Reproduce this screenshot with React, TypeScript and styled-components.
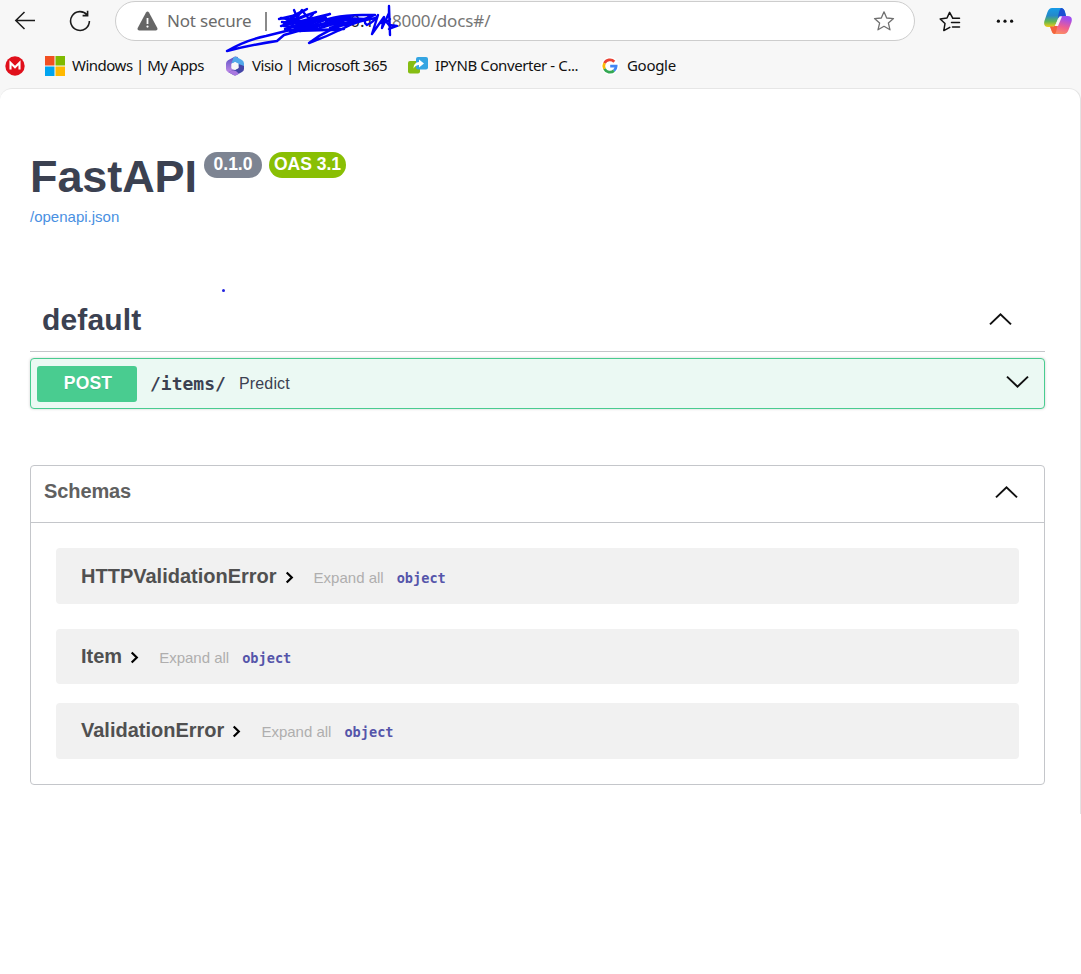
import React from "react";
import styled, { createGlobalStyle } from "styled-components";

const Global = createGlobalStyle`
  * { box-sizing: border-box; }
  body { margin: 0; background: #fff; font-family: "Liberation Sans", Arial, sans-serif; }
  h1, h2, h3 { margin: 0; }
  svg { display: block; flex: none; }
`;

const ui = `"Noto Sans", "Segoe UI", sans-serif`;
const mono = `"DejaVu Sans Mono", monospace`;

const Window = styled.div`
  width: 1081px;
  height: 974px;
  overflow: hidden;
  background: #fff;
`;

const Chrome = styled.header`
  height: 100px;
  background: #f7f7f7;
  margin-bottom: -12px;
  font-family: ${ui};
`;

const Toolbar = styled.div`
  display: flex;
  align-items: center;
  height: 42px;
  padding: 0 9px 0 14px;
`;

const AddressBar = styled.div`
  position: relative;
  display: flex;
  align-items: center;
  width: 800px;
  height: 40px;
  margin: 0 24px 0 24px;
  padding: 0 19px 0 21px;
  border: 1px solid #cdcdcd;
  border-radius: 20px;
  background: #fff;
  color: #6b6b6b;
  font-size: 17px;
`;

const NotSecure = styled.span`
  width: 85px;
  margin-left: 9px;
  padding-bottom: 2px;
  letter-spacing: -0.2px;
  white-space: nowrap;
`;

const Divider = styled.span`
  width: 2px;
  height: 19px;
  margin-left: 13px;
  background: #8a8a8a;
`;

const Url = styled.span`
  flex: 1;
  display: flex;
  margin-left: 10px;
  padding-bottom: 2px;
  white-space: nowrap;
`;

const Host = styled.span`
  width: 115px;
  text-align: right;
  color: #222;
`;

const Path = styled.span`
  color: #767676;
  letter-spacing: -0.1px;
`;

const Scribble = styled.svg`
  position: absolute;
  left: 107px;
  top: 1px;
`;

const Favorites = styled.nav`
  display: flex;
  align-items: center;
  height: 47px;
  padding-left: 5px;
`;

const Favorite = styled.div<{ $width: number; $gap?: number }>`
  display: flex;
  align-items: center;
  gap: ${(p) => p.$gap ?? 7}px;
  width: ${(p) => p.$width}px;
`;

const FavoriteName = styled.span<{ $track: number }>`
  padding-bottom: 2px;
  color: #111;
  font-size: 15px;
  letter-spacing: ${(p) => p.$track}px;
  white-space: nowrap;
`;

const Page = styled.main`
  position: relative;
  height: 726px;
  padding: 63px 35px 0 30px;
  background: #fff;
  border-top: 1px solid #e6e6e6;
  border-right: 1px solid #e3e3e3;
  border-radius: 12px 12px 0 0;
`;

const TitleRow = styled.div`
  display: flex;
  align-items: flex-start;
  height: 56px;
`;

const Title = styled.h1`
  width: 174px;
  color: #3b4151;
  font-size: 45px;
  line-height: 50px;
  letter-spacing: -0.1px;
`;

const Pill = styled.span<{ $bg: string; $width: number }>`
  width: ${(p) => p.$width}px;
  height: 26px;
  margin-right: 7px;
  border-radius: 13px;
  background: ${(p) => p.$bg};
  color: #fff;
  font-size: 17.5px;
  font-weight: 700;
  line-height: 24px;
  text-align: center;
  white-space: nowrap;
`;

const SpecLink = styled.a`
  display: block;
  height: 86px;
  color: #4990e2;
  font-size: 15px;
  line-height: 18px;
`;

const TagHeader = styled.div`
  display: flex;
  align-items: center;
  justify-content: space-between;
  height: 58px;
  padding: 0 33px 6px 12px;
  border-bottom: 1px solid #c4c6ca;
`;

const TagTitle = styled.h2`
  color: #3b4151;
  font-size: 30px;
  line-height: 34px;
  letter-spacing: 0.15px;
`;

const Operation = styled.div`
  display: flex;
  align-items: center;
  height: 51px;
  margin-top: 6px;
  padding: 0 15px 0 6px;
  border: 1px solid #49cc90;
  border-radius: 4px;
  background: #ebf9f3;
  box-shadow: 0 0 3px rgba(0, 0, 0, 0.19);
`;

const Method = styled.span`
  width: 100px;
  height: 36px;
  padding-left: 2px;
  border-radius: 3px;
  background: #49cc90;
  color: #fff;
  font-size: 17.5px;
  font-weight: 700;
  letter-spacing: 0.2px;
  line-height: 34px;
  text-align: center;
  text-shadow: 0 1px 0 rgba(0, 0, 0, 0.1);
`;

const OperationPath = styled.span`
  width: 89px;
  padding-left: 13px;
  color: #3b4151;
  font: 700 18px/24px ${mono};
`;

const Summary = styled.span`
  flex: 1;
  padding-left: 13px;
  color: #3b4151;
  font-size: 16px;
  letter-spacing: 0.15px;
`;

const Schemas = styled.section`
  height: 320px;
  margin-top: 56px;
  border: 1px solid #c4c6ca;
  border-radius: 4px;
`;

const SchemasHeader = styled.div`
  display: flex;
  align-items: center;
  justify-content: space-between;
  height: 57px;
  padding: 0 26px 6px 13px;
  border-bottom: 1px solid #c4c6ca;
`;

const SchemasTitle = styled.h3`
  color: #606060;
  font-size: 20px;
  line-height: 24px;
  letter-spacing: -0.1px;
`;

const Models = styled.div`
  padding: 25px 25px 0;
`;

const Model = styled.div<{ $height: number; $after: number; $lift: number }>`
  display: flex;
  align-items: center;
  height: ${(p) => p.$height}px;
  margin-bottom: ${(p) => p.$after}px;
  padding: 0 25px ${(p) => p.$lift}px;
  border-radius: 4px;
  background: #f1f1f1;
`;

const ModelName = styled.span`
  color: #505050;
  font-size: 20px;
  font-weight: 700;
  line-height: 24px;
`;

const ExpandAll = styled.span`
  margin-left: 20px;
  padding-top: 4px;
  color: #afaeae;
  font-size: 15px;
  line-height: 18px;
`;

const TypeName = styled.span`
  margin-left: 13px;
  padding-top: 3px;
  color: #55a;
  font: 700 13.6px/18px ${mono};
`;

const Caret = styled.svg`
  margin: 3px 0 0 8px;
`;

const ArrowIcon = styled.svg<{ $lift: number }>`
  margin-bottom: ${(p) => p.$lift}px;
`;

const Arrow = ({ down, lift = 0 }: { down?: boolean; lift?: number }) => (
  <ArrowIcon $lift={lift} width="24" height="14" viewBox="0 0 24 14" fill="none" stroke="#111" strokeWidth="2">
    <path d={down ? "M2 1.6 12.5 11.6 23 1.6" : "M2 12.4 12.5 2.4 23 12.4"} />
  </ArrowIcon>
);

const models = [
  { name: "HTTPValidationError", height: 56, after: 25, lift: 0 },
  { name: "Item", height: 55, after: 19, lift: 1 },
  { name: "ValidationError", height: 56, after: 0, lift: 2 },
];

const Back = () => (
  <svg width="22" height="22" viewBox="0 0 22 22" fill="none" stroke="#1b1b1b" strokeWidth="1.5">
    <path d="M21 10.5H2M10.5 2 1.8 10.5 10.5 19" />
  </svg>
);

const ReloadIcon = styled.svg`
  margin-left: 33px;
`;

const Reload = () => (
  <ReloadIcon width="22" height="22" viewBox="0 0 22 22" fill="none" stroke="#1b1b1b" strokeWidth="1.6">
    <path d="M18.2 5A9.4 9.4 0 1 0 20.4 11M18.6 0.8V5.6H13.6" />
  </ReloadIcon>
);

const Warning = () => (
  <svg width="21" height="20" viewBox="0 0 21 20">
    <path d="M9 1.4Q10.5-.6 12 1.4L20.3 17Q21 19.3 18.8 19.5H2.2Q0 19.3.7 17Z" fill="#666" />
    <path d="M10.5 7v6" stroke="#fff" strokeWidth="1.8" />
    <circle cx="10.5" cy="15.6" r="1.1" fill="#fff" />
  </svg>
);

const Star = () => (
  <svg width="22" height="22" viewBox="0 0 22 22" fill="none" stroke="#707070" strokeWidth="1.3" strokeLinejoin="round">
    <path d="M11 1.8 13.7 8 20.5 8.6 15.4 13.1 17 19.8 11 16.3 5 19.8 6.6 13.1 1.5 8.6 8.3 8Z" />
  </svg>
);

const FavoritesIcon = () => (
  <svg width="22" height="22" viewBox="0 0 22 22" fill="none" stroke="#111" strokeWidth="1.5" strokeLinejoin="round" strokeLinecap="round">
    <path d="M13.6 7.9 10.6 2.4 8 8 1.2 9 6 13.5 4.8 20.6 10.8 17.4M13.6 8.2H20.5M12.5 12.6H20.5M13.5 17H20.5" />
  </svg>
);

const DotsIcon = styled.svg`
  margin-left: 35px;
`;

const Dots = () => (
  <DotsIcon width="18" height="6" viewBox="0 0 18 6" fill="#111">
    <circle cx="2.4" cy="3.2" r="1.6" />
    <circle cx="9" cy="3.2" r="1.6" />
    <circle cx="15.6" cy="3.2" r="1.6" />
  </DotsIcon>
);

const CopilotIcon = styled.svg`
  margin-left: auto;
`;

const Copilot = () => (
  <CopilotIcon width="28" height="27" viewBox="0 0 28 27">
    <defs>
      <linearGradient id="cpA" x1="0" y1="0" x2="0" y2="1">
        <stop offset="0" stopColor="#159be8" />
        <stop offset=".4" stopColor="#2589c8" />
        <stop offset=".72" stopColor="#65b750" />
        <stop offset="1" stopColor="#f4cc16" />
      </linearGradient>
      <linearGradient id="cpB" x1="0.3" y1="0" x2="0" y2="1">
        <stop offset="0" stopColor="#a04df0" />
        <stop offset=".5" stopColor="#f0608e" />
        <stop offset="1" stopColor="#ff9d55" />
      </linearGradient>
    </defs>
    <path d="M8 0H17Q20 0 21 4L22 8H17Q14.5 8 13.8 11L11.5 17Q10.5 19 8 19H4Q-1 19 .4 13L3.5 4Q5 0 8 0Z" fill="url(#cpA)" />
    <path d="M17 0H17.5Q20 .5 21 4L22 8H17.5Q15.5 8 14 10.5Q14.5 3 17 0Z" fill="#1c4fd2" />
    <path d="M20 26H11Q8 26 7.4 22L6.2 19H9Q12 19 13 15L15 10Q16 8 18 8H23.5Q29 8 27.5 14L24.5 22Q23 26 20 26Z" fill="url(#cpB)" />
    <path d="M6 18.5H9.5Q12 18 13 15Q13.5 22 11 26Q8.5 26 7.5 22.5Z" fill="#f4633c" />
    <path d="M15.5 8.5H18L14 18H10.8Z" fill="#f7f7f7" />
  </CopilotIcon>
);

const Mega = () => (
  <svg width="20" height="20" viewBox="0 0 20 20">
    <circle cx="10" cy="10" r="9.7" fill="#e0101b" />
    <path d="M5.5 13.6V6.8L10 11.2 14.5 6.8V13.6" fill="none" stroke="#fff" strokeWidth="2.1" />
  </svg>
);

const Microsoft = () => (
  <svg width="20" height="20" viewBox="0 0 20 20">
    <path fill="#f25022" d="M0 0h9.5v9.5H0z" />
    <path fill="#7fba00" d="M10.5 0H20v9.5h-9.5z" />
    <path fill="#00a4ef" d="M0 10.5h9.5V20H0z" />
    <path fill="#ffb900" d="M10.5 10.5H20V20h-9.5z" />
  </svg>
);

const M365 = () => (
  <svg width="20" height="20" viewBox="0 0 20 20">
    <defs>
      <linearGradient id="mA" x1="0" y1="0" x2="0" y2="1">
        <stop offset="0" stopColor="#5a4fc4" />
        <stop offset="1" stopColor="#c38ce8" />
      </linearGradient>
    </defs>
    <path d="M10 .6 3 4.3Q1 5.5 1 7.5V13Q1 15.2 3 16L6 17 9 14 6.5 12.5V7.5L12 4.5 13 1Z" fill="url(#mA)" />
    <path d="M8.5 1.2Q10.3.3 12 1.2L17 4Q19 5.2 19 7.5V12L13.5 10V7.8L10.2 6 6.5 7.5Z" fill="#52a8ea" />
    <path d="M19 10V13Q19 15 17 16L12 18.8Q10 20 8 18.8L3.5 16.2 8.5 13.8H10.5L13.5 12V8Z" fill="#4545a8" />
    <path d="M3 15.9 8 14.3 11 15 14 17.7 12 18.8Q10 20 8 18.8Z" fill="#a978e0" />
    <path d="M10 6.2 13.4 8.1V11.9L10 13.8 6.6 11.9V8.1Z" fill="#f7f7f7" />
  </svg>
);

const Converter = () => (
  <svg width="20" height="17" viewBox="0 0 20 17">
    <rect x="0" y="4" width="12" height="12.5" rx="2" fill="#86bd13" />
    <rect x="8" y="0" width="12" height="12.5" rx="2" fill="#35a5e2" />
    <path d="M5.5 11.5Q5.5 5.5 11 5V2.4L16 6.6 11 10.5V8Q7.5 8 5.5 11.5Z" fill="#fff" />
  </svg>
);

const Google = () => (
  <svg width="18" height="18" viewBox="0 0 18 18">
    <circle cx="9" cy="9" r="9" fill="#fff" />
    <g fill="none" strokeWidth="2.8">
      <path d="M3.5 6.2A6.1 6.1 0 0 1 13.3 4.7" stroke="#ea4335" />
      <path d="M3.5 11.8A6.1 6.1 0 0 1 3.5 6.2" stroke="#fbbc05" />
      <path d="M13 13.6A6.1 6.1 0 0 1 3.5 11.8" stroke="#34a853" />
      <path d="M9.2 9.2H15.1Q15.1 12 13 13.6" stroke="#4285f4" />
    </g>
  </svg>
);

const InkDot = styled.span`
  position: absolute;
  left: 222px;
  top: 200px;
  width: 3px;
  height: 3px;
  border-radius: 2px;
  background: #2222e0;
`;

export default function App() {
  return (
    <Window>
      <Global />
      <Chrome>
        <Toolbar>
          <Back />
          <Reload />
          <AddressBar>
            <Warning />
            <NotSecure>Not secure</NotSecure>
            <Divider />
            <Url>
              <Host>.0.1 &nbsp; :</Host>
              <Path>8000/docs#/</Path>
            </Url>
            <Star />
            <Scribble width="178" height="52" viewBox="223 2 178 52" fill="none" stroke="#0000f5" strokeWidth="2.4" strokeLinecap="round" strokeLinejoin="round">
              <path d="M227 50 Q246 39 266 35 L290 29 M227 50 Q250 44 277 40 L284 34 L298 30 L344 28" />
              <path d="M279 18 L292 15 L307 8 L284 22 L316 11 L281 25 L330 13 L285 28 L326 17 L290 30 L335 20 L300 30 L322 24" />
              <path d="M281 17 L300 20 M282 21 L312 24 M284 25 L318 28 M288 29 L340 29" />
              <path d="M294 9 L302 28 M302 9 L289 29 M304 12 L318 28 M313 13 L300 29" />
              <path d="M312 25 Q330 14 362 14 L375 14 Q356 22 338 22 Q322 26 318 28 Q338 15 364 18 L352 22 Q330 26 309 42 Q326 36 344 27 Q356 20 376 17 M326 20 L352 15 M324 24 L350 18 M330 27 L358 18" />
              <path d="M368 18 Q362 20 367 24 Q374 21 378 14 L372 33 L384 16 L382 27 L389 12 L389 5 L390 34 M384 18 L389 24 L397 25 L389 28 M380 22 L388 20" />
            </Scribble>
          </AddressBar>
          <FavoritesIcon />
          <Dots />
          <Copilot />
        </Toolbar>
        <Favorites>
          <Favorite $width={40}><Mega /></Favorite>
          <Favorite $width={180}><Microsoft /><FavoriteName $track={-0.5}>Windows | My Apps</FavoriteName></Favorite>
          <Favorite $width={183}><M365 /><FavoriteName $track={-0.48}>Visio | Microsoft 365</FavoriteName></Favorite>
          <Favorite $width={193}><Converter /><FavoriteName $track={-0.4}>IPYNB Converter - C...</FavoriteName></Favorite>
          <Favorite $width={80} $gap={8}><Google /><FavoriteName $track={-0.3}>Google</FavoriteName></Favorite>
        </Favorites>
      </Chrome>
      <Page>
        <TitleRow>
          <Title>FastAPI</Title>
          <Pill $bg="#7d8492" $width={58}>0.1.0</Pill>
          <Pill $bg="#89bf04" $width={77}>OAS 3.1</Pill>
        </TitleRow>
        <SpecLink>/openapi.json</SpecLink>
        <InkDot />
        <TagHeader>
          <TagTitle>default</TagTitle>
          <Arrow lift={2} />
        </TagHeader>
        <Operation>
          <Method>POST</Method>
          <OperationPath>/items/</OperationPath>
          <Summary>Predict</Summary>
          <Arrow down lift={3} />
        </Operation>
        <Schemas>
          <SchemasHeader>
            <SchemasTitle>Schemas</SchemasTitle>
            <Arrow lift={-2} />
          </SchemasHeader>
          <Models>
            {models.map((m) => (
              <Model key={m.name} $height={m.height} $after={m.after} $lift={m.lift}>
                <ModelName>{m.name}</ModelName>
                <Caret width="9" height="13" viewBox="0 0 9 13" fill="none" stroke="#000" strokeWidth="2.2">
                  <path d="M1.7 1.5 6.8 6.5 1.7 11.5" />
                </Caret>
                <ExpandAll>Expand all</ExpandAll>
                <TypeName>object</TypeName>
              </Model>
            ))}
          </Models>
        </Schemas>
      </Page>
    </Window>
  );
}
